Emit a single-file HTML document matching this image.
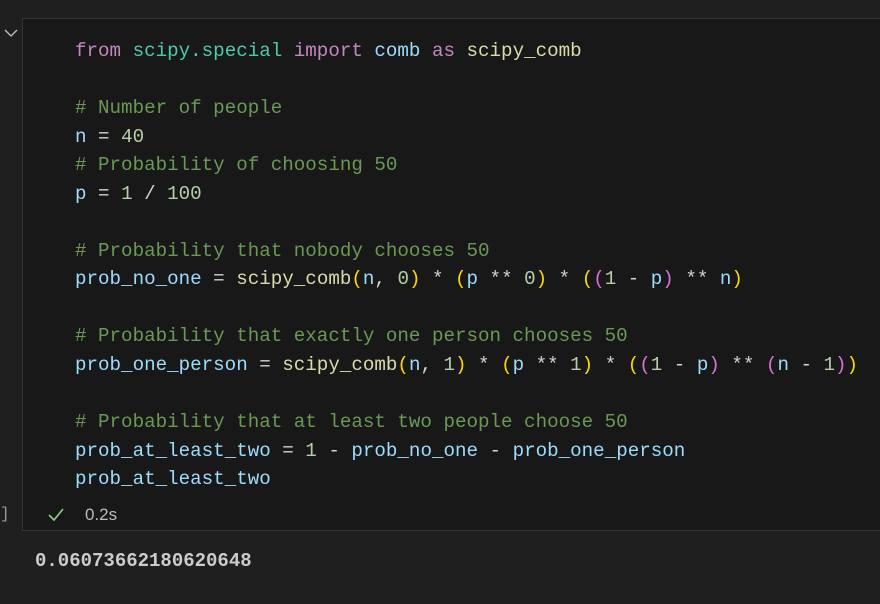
<!DOCTYPE html>
<html><head><meta charset="utf-8"><style>
html,body{margin:0;padding:0;background:#1f1f1f;width:880px;height:604px;overflow:hidden;position:relative;font-family:"Liberation Mono",monospace}
.cell{position:absolute;left:22px;top:18px;width:870px;height:513px;background:#181818;border:1px solid #343434;box-sizing:border-box}
pre{position:absolute;left:75px;top:37px;margin:0;font-family:"Liberation Mono",monospace;font-size:19.2px;line-height:28.55px;color:#d4d4d4;white-space:pre}
.k{color:#c586c0}.m{color:#4ec9b0}.f{color:#dcdcaa}.v{color:#9cdcfe}.c{color:#6a9955}.n{color:#b5cea8}
.y{color:#ffd700}.o{color:#da70d6}
.chev{position:absolute;left:4px;top:28px}
.st{position:absolute;left:85px;top:505px;font-family:"Liberation Sans",sans-serif;font-size:17px;color:#bbbbbb}
.br{position:absolute;left:0px;top:505px;font-size:16px;color:#999}
.out{position:absolute;left:35px;top:550px;font-size:19px;font-weight:bold;color:#cccccc}
</style></head><body>
<svg class="chev" width="14" height="10" viewBox="0 0 14 10"><path d="M1 2 L7 8 L13 2" fill="none" stroke="#c5c5c5" stroke-width="1.3"/></svg>
<div class="cell"></div>
<pre><span class="k">from</span> <span class="m">scipy.special</span> <span class="k">import</span> <span class="v">comb</span> <span class="k">as</span> <span class="f">scipy_comb</span>

<span class="c"># Number of people</span>
<span class="v">n</span> = <span class="n">40</span>
<span class="c"># Probability of choosing 50</span>
<span class="v">p</span> = <span class="n">1</span> / <span class="n">100</span>

<span class="c"># Probability that nobody chooses 50</span>
<span class="v">prob_no_one</span> = <span class="f">scipy_comb</span><span class="y">(</span><span class="v">n</span>, <span class="n">0</span><span class="y">)</span> * <span class="y">(</span><span class="v">p</span> ** <span class="n">0</span><span class="y">)</span> * <span class="y">(</span><span class="o">(</span><span class="n">1</span> - <span class="v">p</span><span class="o">)</span> ** <span class="v">n</span><span class="y">)</span>

<span class="c"># Probability that exactly one person chooses 50</span>
<span class="v">prob_one_person</span> = <span class="f">scipy_comb</span><span class="y">(</span><span class="v">n</span>, <span class="n">1</span><span class="y">)</span> * <span class="y">(</span><span class="v">p</span> ** <span class="n">1</span><span class="y">)</span> * <span class="y">(</span><span class="o">(</span><span class="n">1</span> - <span class="v">p</span><span class="o">)</span> ** <span class="o">(</span><span class="v">n</span> - <span class="n">1</span><span class="o">)</span><span class="y">)</span>

<span class="c"># Probability that at least two people choose 50</span>
<span class="v">prob_at_least_two</span> = <span class="n">1</span> - <span class="v">prob_no_one</span> - <span class="v">prob_one_person</span>
<span class="v">prob_at_least_two</span></pre>
<div class="br">]</div>
<svg style="position:absolute;left:47px;top:507px" width="18" height="16" viewBox="0 0 18 16"><path d="M2 8 L7 13 L16 2" fill="none" stroke="#89d185" stroke-width="1.6"/></svg>
<div class="st">0.2s</div>
<div class="out">0.06073662180620648</div>
</body></html>
